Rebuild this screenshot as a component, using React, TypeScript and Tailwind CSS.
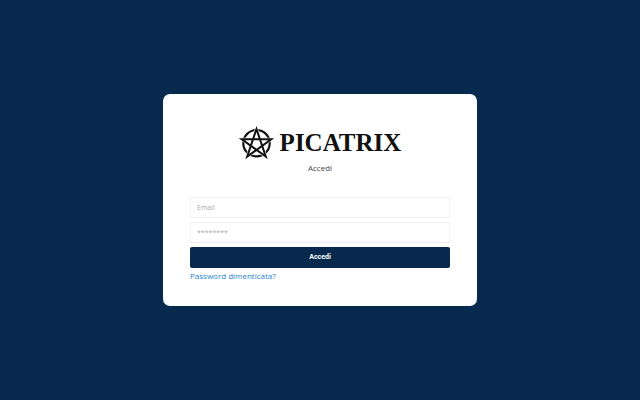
function PentacleIcon() {
  return (
    <svg
      className="w-[35px] h-[34px]"
      viewBox="0 0 35 34"
      fill="none"
      stroke="currentColor"
      strokeMiterlimit="8"
      aria-hidden="true"
    >
      <circle cx="17.5" cy="17.2" r="13.2" strokeWidth="2.2" />
      <path
        d="M17.5 3 L26.8 30.6 L2.8 13.2 H32.2 L8.2 30.6 Z"
        stroke="white"
        strokeWidth="3"
      />
      <path
        d="M17.5 3 L26.8 30.6 L2.8 13.2 H32.2 L8.2 30.6 Z"
        strokeWidth="2"
      />
    </svg>
  );
}

function Logo() {
  return (
    <div className="flex items-center justify-center gap-[6px] text-[#111111]">
      <PentacleIcon />
      <span className="font-['Liberation_Serif',serif] font-bold text-[25px] leading-8">
        PICATRIX
      </span>
    </div>
  );
}

const inputClass =
  "block w-full h-[21px] px-[6px] rounded-[2px] border border-[#f0f0f2] bg-white text-[7px] text-gray-700 placeholder:text-[#a9a9ad] outline-none focus:border-[#07294d]";

export default function App() {
  return (
    <main className="flex min-h-screen items-center justify-center bg-[#07294d] font-['Open_Sans',sans-serif]">
      <div className="w-full max-w-[314px] rounded-[7px] bg-white px-[27px] pt-8 pb-[22px]">
        <Logo />
        <h1 className="text-center text-[8px] leading-4 text-[#444444]">
          Accedi
        </h1>

        <form className="mt-[21px]" onSubmit={(e) => e.preventDefault()}>
          <div className="flex flex-col gap-1">
            <input
              type="email"
              aria-label="Email"
              placeholder="Email"
              className={inputClass}
            />
            <input
              type="password"
              aria-label="Password"
              placeholder="********"
              className={inputClass}
            />
            <button
              type="submit"
              className="w-full h-[21px] rounded-[2px] bg-[#07294d] font-['Roboto',sans-serif] text-[7px] font-bold text-white"
            >
              Accedi
            </button>
          </div>
          <a
            href="#"
            className="block text-[8px] leading-4 text-[#2484cb] hover:underline"
          >
            Password dimenticata?
          </a>
        </form>
      </div>
    </main>
  );
}
